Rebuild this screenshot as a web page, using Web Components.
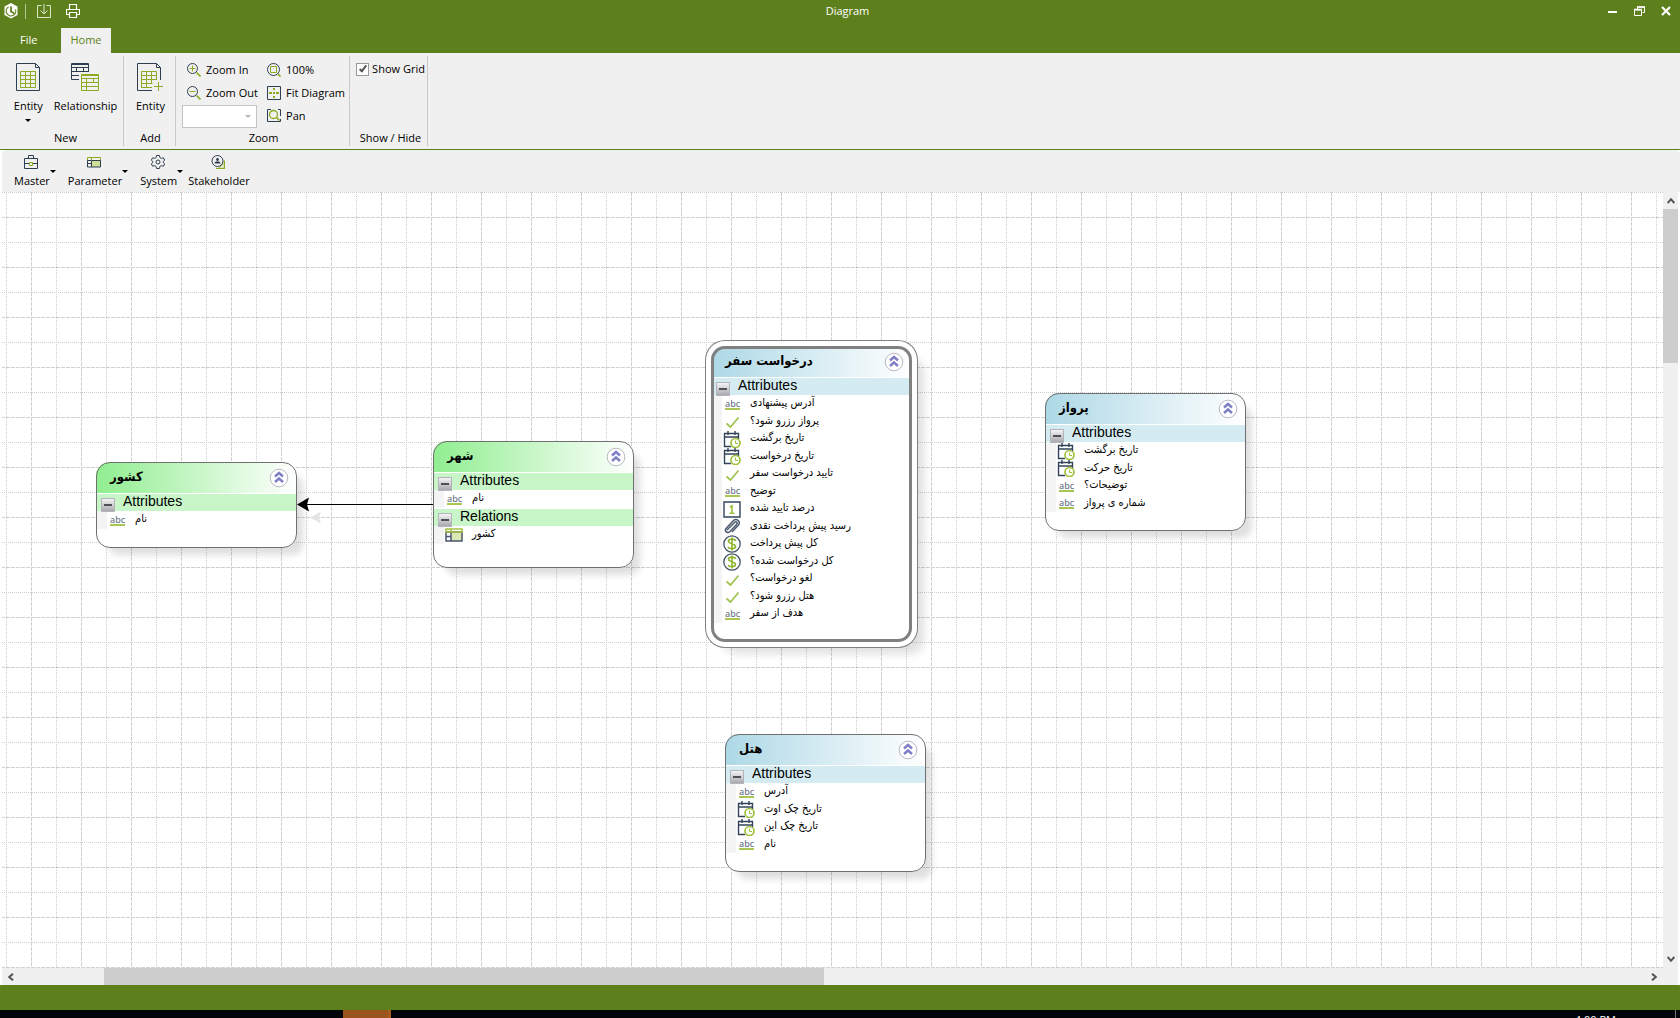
<!DOCTYPE html>
<html lang="en">
<head>
<meta charset="utf-8">
<title>Diagram</title>
<style>
html, body { height: 100%; }
body { margin: 0; overflow: hidden; font: 11px/16px "Open Sans", "Noto Sans", sans-serif; color: #000; }
</style>
</head>
<body>
<diagram-app></diagram-app>
<script>
const G = '#8aab22', N = '#2f3f52';
const ICONS = {
  logo: [14, 16, `<path d="M7 0l6.500 3.500v8.500L7 15.500.5 12V3.500z" fill="#fff"/><path d="M7 3.500v5l3.500 2" fill="none" stroke="#5e801c" stroke-width="1.800"/><path d="M4.500 4A4.800 4.800 0 1 0 11.500 6.500" fill="none" stroke="#5e801c" stroke-width="1.200"/>`],
  save: [14, 14, `<path d="M4.500 1.500h-4v12h13v-12h-4M7 0v9M3.500 6.500L7 10l3.500-3.500" fill="none" stroke="#dfe8cf"/>`],
  print: [14, 14, `<path d="M3.500 5V.500h7V5M3.500 10.500h-3v-5h13v5h-3M3.500 8.500h7v5h-7z" fill="none" stroke="#fff" stroke-width="1.200"/>`],
  min: [11, 11, `<path d="M1 6h9" stroke="#fff" stroke-width="2"/>`],
  restore: [11, 10, `<path d="M.5 4h7v5.500h-7zM3.500 3V1h7v5.500h-2" fill="none" stroke="#fff"/><path d="M0 3.500h8M3 1h8" stroke="#fff" stroke-width="1.500"/>`],
  close: [10, 10, `<path d="M1 1l8 8M9 1L1 9" stroke="#fff" stroke-width="2.200"/>`],
  entity: [24, 28, `<path d="M.5.500h19l4 4v23H.500zM19.500.500v4h4" fill="none" stroke="${N}"/><path d="M4.500 8.500h15v16h-15zM4.500 12.500h15M4.500 16.500h15M4.500 20.500h15M9.500 8.500v16M14.500 8.500v16" fill="none" stroke="${G}"/>`],
  relation: [28, 28, `<path d="M8 16.500H.500V.500h17V8M.500 4.500h17M.500 8.500H18M.500 12.500H8M5.500 4v5M.500 1.500h17M12.500 4v5" fill="none" stroke="${N}"/><path d="M10.500 11.500h17v16h-17zM10.500 12.500h17M10.500 15.500h17M10.500 19.500h17M10.500 23.500h17M15.500 15v12M22.500 15v5" fill="none" stroke="${G}"/>`],
  addEntity: [28, 28, `<path d="M15 27.500H.500V.500h19l4 4V17M19.500.500v4h4" fill="none" stroke="${N}"/><path d="M15 24.500H4.500v-16h15V17M4.500 12.500h15M4.500 16.500h15M4.500 20.500h11M9.500 8.500v16M14.500 8.500v12M21.500 19v9M17 23.500h9" fill="none" stroke="${G}"/>`],
  zoomIn: [14, 14, `<circle cx="5.500" cy="5.500" r="5" fill="none" stroke="${N}"/><path d="M2.500 5.500h6M5.500 2.500v6" stroke="${G}"/><path d="M9.500 9.500L13.500 13.500" stroke="${G}" stroke-width="1.600"/>`],
  zoomOut: [14, 14, `<circle cx="5.500" cy="5.500" r="5" fill="none" stroke="${N}"/><path d="M2.500 5.500h6" stroke="${G}"/><path d="M9.500 9.500L13.500 13.500" stroke="${G}" stroke-width="1.600"/>`],
  hundred: [14, 14, `<circle cx="6.500" cy="6.500" r="6" fill="none" stroke="${N}"/><path d="M3.500 3.500h6v6h-6z" fill="none" stroke="${G}"/><path d="M11 11l2.500 2.500" stroke="${G}" stroke-width="1.600"/>`],
  fit: [14, 14, `<path d="M.5.500h13v13H.500z" fill="none" stroke="${N}"/><path d="M6 2h2v2H6zM6 6h2v2H6zM6 10h2v2H6zM2 6h3v2H2zM9 6h3v2H9z" fill="${G}"/>`],
  pan: [14, 13, `<path d="M4 .500H.500v12h13V10M11 .500h2.500V7" fill="none" stroke="${N}"/><circle cx="6.500" cy="5.500" r="4" fill="none" stroke="${G}" stroke-width="1.300"/><path d="M9.500 8.500l3 3" stroke="${G}" stroke-width="1.600"/>`],
  master: [14, 14, `<path d="M.5 3.500h13v10H.500zM4.500 3V.500h5V3M0 8.500h5M9 8.500h5" fill="none" stroke="${N}"/><path d="M5.500 7.500h3v3h-3z" fill="none" stroke="${G}"/>`],
  param: [14, 12, `<path d="M5 4h8v7H5z" fill="#cfdf98"/><path d="M.5 1.500h13v3H.500z" fill="none" stroke="${G}"/><path d="M.5 4.500h13v6.500H.500zM4.500 4v7M.500 7.500h4" fill="none" stroke="${N}"/><path d="M4.500 1v3.500" fill="none" stroke="${G}"/>`],
  gear: [14, 14, `<path d="M5.600.500h2.800l.5 2 1.500.9 2-.6 1.300 2.400-1.500 1.300v1l1.500 1.300-1.300 2.400-2-.6-1.500.9-.5 2H5.600l-.5-2-1.500-.9-2 .6L.300 8.800l1.500-1.300v-1L.300 5.200l1.300-2.400 2 .6 1.500-.9z" fill="none" stroke="${N}"/><circle cx="7" cy="7" r="2" fill="none" stroke="${N}"/>`],
  stake: [14, 14, `<path d="M5 13.500h8.500v-8" fill="none" stroke="${G}" stroke-width="1.500"/><path d="M8.500 12.200L12.200 9" stroke="${G}"/><circle cx="6.500" cy="6" r="5.500" fill="#f0f0f0" stroke="${N}"/><circle cx="6.500" cy="4.500" r="1.400" fill="${N}"/><path d="M3.500 8.500c0-3 6-3 6 0z" fill="${N}"/>`],
  chevrons: [20, 20, `<circle cx="10" cy="10" r="8.800" fill="#fff" stroke="#b9b9c4"/><path d="M6 8.500L10 5l4 3.500M6 14l4-3.500L14 14" fill="none" stroke="#7f7fc6" stroke-width="2.500"/>`],
  abc: [17, 17, `<text x="1" y="11" font-family="Noto Sans, sans-serif" font-size="9" font-weight="500" fill="#6d7887">abc</text><path d="M1 13h15" stroke="#a9c653" stroke-width="2"/>`],
  check: [17, 17, `<path d="M2.500 10.500L6.500 14 14.500 4.500" fill="none" stroke="#9fc24c" stroke-width="1.700"/>`],
  date: [18, 17, `<path d="M8 15.500H1.500V2.500h14V8M1.500 6h14" fill="none" stroke="#33445a" stroke-width="1.400"/><path d="M5 0v4M12 0v4" stroke="#33445a" stroke-width="1.400"/><circle cx="12.500" cy="12" r="4.500" fill="#fff" stroke="#9fc13c" stroke-width="1.700"/><path d="M12.500 9.500v3h2.500" fill="none" stroke="#9fc13c"/>`],
  number: [18, 17, `<path d="M1 1h16v15H1z" fill="#fff" stroke="#33445a" stroke-width="1.400"/><path d="M7 6l2-1.200V12M6.500 12.300h5" fill="none" stroke="#9fc13c" stroke-width="1.600"/>`],
  clip: [18, 17, `<path d="M4 12l7.500-7.500c1.500-1.500 3.500 0 2 2L7 13.500c-2.500 2.500-6-.500-4-3L10.500 2.500c3-2.800 7.500 1 5 4.500L9 14" fill="none" stroke="#4c5b6e" stroke-width="1.500"/>`],
  money: [18, 18, `<circle cx="9" cy="9" r="8.200" fill="#fff" stroke="#445467" stroke-width="1.300"/><path d="M12.500 6c-.5-2.500-7-2.500-7 .300 0 3 7 2 7 5.200 0 3-7 2.800-7.200.2M9 2.500v13" fill="none" stroke="#8fb52c" stroke-width="1.600"/>`],
  relTable: [18, 14, `<path d="M7 5h10v8H7z" fill="#dce8b4"/><path d="M1 4h16v9H1zM6 4v9M1 8.500h5" fill="none" stroke="#45566a" stroke-width="1.500"/><path d="M1 1h16v3H1zM6 1v3" fill="none" stroke="#a4c245" stroke-width="1.600"/>`],
  up: [8, 7, `<path d="M.7 6L4 2.200 7.300 6" fill="none" stroke="#555" stroke-width="2"/>`],
  down: [8, 7, `<path d="M.7 1L4 4.800 7.300 1" fill="none" stroke="#555" stroke-width="2"/>`],
  left: [7, 8, `<path d="M6 .7L2.200 4 6 7.300" fill="none" stroke="#555" stroke-width="2"/>`],
  right: [7, 8, `<path d="M1 .7L4.800 4 1 7.300" fill="none" stroke="#555" stroke-width="2"/>`]
};
const RESET = `<style>
*, *::before, *::after { box-sizing: border-box; }
button, select, input { font: inherit; color: inherit; margin: 0; }
button { border: 0; padding: 0; background: none; }
</style>`;
class Base extends HTMLElement {
  connectedCallback() {
    if (this.shadowRoot) return;
    this.attachShadow({ mode: 'open' }).innerHTML = RESET + this.view();
  }
  at(name) { return this.getAttribute(name) || ''; }
}
class UiIcon extends Base {
  view() {
    const [w, h, body] = ICONS[this.at('name')];
    return `<style>:host{display:block;flex:none;width:${w}px;height:${h}px}svg{display:block}</style>
      <svg width="${w}" height="${h}" viewBox="0 0 ${w} ${h}" aria-hidden="true">${body}</svg>`;
  }
}
class TitleBar extends Base {
  view() {
    return `<style>
      :host{display:grid;grid-template-columns:1fr auto 1fr;align-items:center;height:28px;padding:0 9px 6px 4px;background:#5e801c;color:#fff}
      .left,.right{display:flex;align-items:center}
      .right{justify-content:flex-end;gap:16px}
      .sep{width:1px;height:15px;background:#b5c698;margin:0 11px 0 7px}
      .left button+button{margin-left:15px}
      h1{font:inherit;margin:0;padding-left:20px}
    </style>
    <div class="left"><ui-icon name="logo"></ui-icon><span class="sep"></span>
      <button aria-label="Save"><ui-icon name="save"></ui-icon></button><button aria-label="Print"><ui-icon name="print"></ui-icon></button></div>
    <h1>Diagram</h1>
    <div class="right"><button aria-label="Minimize"><ui-icon name="min"></ui-icon></button><button aria-label="Restore"><ui-icon name="restore"></ui-icon></button><button aria-label="Close"><ui-icon name="close"></ui-icon></button></div>`;
  }
}
class RibbonTabs extends Base {
  view() {
    return `<style>
      :host{display:flex;height:25px;padding-left:11px;gap:15px;background:#5e801c;color:#fff}
      button{padding:0 9px 2px}
      .on{background:#f0f0f0;color:#5e801c}
    </style><button>File</button><button class="on">Home</button>`;
  }
}
class RibbonGroup extends Base {
  view() {
    return `<style>
      :host{display:flex;flex-direction:column;box-sizing:border-box;border-right:1px solid #c8c8c8}
      .body{flex:1;display:flex;justify-content:center}
      .label{text-align:center;line-height:16px}
    </style><div class="body"><slot></slot></div><div class="label">${this.at('label')}</div>`;
  }
}
class BigButton extends Base {
  view() {
    return `<style>
      :host{display:block}
      button{display:flex;flex-direction:column;align-items:center;gap:7px;padding-top:7px;line-height:16px}
      .caret{border:3px solid transparent;border-top-color:#000;border-bottom:0;margin-top:-2px}
    </style><button><ui-icon name="${this.at('icon')}"></ui-icon><span>${this.at('label')}</span>${this.hasAttribute('menu') ? '<span class="caret"></span>' : ''}</button>`;
  }
}
class SmallButton extends Base {
  view() {
    return `<style>
      :host{display:block}
      button{display:flex;align-items:center;gap:5px;height:23px;white-space:nowrap}
    </style><button><ui-icon name="${this.at('icon')}"></ui-icon><span>${this.at('label')}</span></button>`;
  }
}
class ZoomSelect extends Base {
  view() {
    return `<style>
      :host{display:grid;align-items:center;width:75px;height:23px}
      select,.caret{grid-area:1/1}
      select{appearance:none;width:100%;height:100%;border:1px solid #c4c4c4;border-radius:0;background:#fff;opacity:1}
      .caret{justify-self:end;margin-right:6px;border:3px solid transparent;border-top-color:#b8b8b8;border-bottom:0;z-index:1}
    </style><select aria-label="Zoom level" disabled></select><span class="caret"></span>`;
  }
}
class GridToggle extends Base {
  view() {
    return `<style>
      :host{display:block}
      label{display:flex;align-items:center;gap:3px;height:16px;margin-top:5px;white-space:nowrap}
      input{appearance:none;width:13px;height:13px;border:1px solid #9a9a9a;background:#fff;display:grid;place-items:center}
      input:checked::after{content:"";width:4px;height:8px;border:solid #555;border-width:0 2px 2px 0;transform:rotate(38deg);margin-top:-2px}
    </style><label for="g"><input id="g" type="checkbox" checked>Show Grid</label>`;
  }
}
class RibbonBar extends Base {
  view() {
    return `<style>
      :host{display:flex;box-sizing:border-box;height:97px;padding:3px 0;background:#f0f0f0;border-bottom:1px solid #5e801c}
      .new{width:124px;padding-left:8px}.add{width:52px;padding-left:2px}.zoom{width:174px;padding-left:2px}.show{width:78px;padding-left:4px}
      .new big-button+big-button{margin-left:11px}
      .cols{display:flex;gap:9px}
      .col{display:flex;flex-direction:column;padding-top:2px}
      .col:first-child small-button{padding-left:5px}
      .col:first-child{width:76px}
      .col zoom-select{margin-top:1px}
    </style>
    <ribbon-group class="new" label="New"><big-button icon="entity" label="Entity" menu></big-button><big-button icon="relation" label="Relationship"></big-button></ribbon-group>
    <ribbon-group class="add" label="Add"><big-button icon="addEntity" label="Entity"></big-button></ribbon-group>
    <ribbon-group class="zoom" label="Zoom"><div class="cols"><div class="col"><small-button icon="zoomIn" label="Zoom In"></small-button><small-button icon="zoomOut" label="Zoom Out"></small-button><zoom-select></zoom-select></div>
      <div class="col"><small-button icon="hundred" label="100%"></small-button><small-button icon="fit" label="Fit Diagram"></small-button><small-button icon="pan" label="Pan"></small-button></div></div></ribbon-group>
    <ribbon-group class="show" label="Show / Hide"><grid-toggle></grid-toggle></ribbon-group>`;
  }
}
class ToolButton extends Base {
  view() {
    const m = this.hasAttribute('menu');
    return `<style>
      :host{display:block}
      button{display:flex;align-items:center;line-height:16px;padding-left:${m ? 7 : 0}px}
      .c{display:flex;flex-direction:column;align-items:center}
      .i{height:18px;display:flex;align-items:center;margin-bottom:2px;padding-right:2px}
      .caret{border:3px solid transparent;border-top-color:#000;border-bottom:0}
    </style><button><span class="c"><span class="i"><ui-icon name="${this.at('icon')}"></ui-icon></span><span>${this.at('label')}</span></span>${m ? '<span class="caret"></span>' : ''}</button>`;
  }
}
class ToolStrip extends Base {
  view() {
    return `<style>
      :host{display:flex;box-sizing:border-box;gap:5px;height:42px;margin-left:2px;padding:3px 5px;background:#f0f0f0;border-radius:4px 4px 0 0}
    </style><tool-button icon="master" label="Master" menu></tool-button><tool-button icon="param" label="Parameter" menu></tool-button><tool-button icon="gear" label="System" menu></tool-button><tool-button icon="stake" label="Stakeholder"></tool-button>`;
  }
}
class AttrRow extends Base {
  view() {
    return `<style>
      :host{display:flex;height:18px;align-items:center}
      :host(:nth-child(even)){height:17px}
      .strip{width:11px;height:100%;background:#f4f4f4;flex:none}
      .i{width:20px;margin-right:8px;display:flex;justify-content:center;flex:none}
      .t{font:var(--row-font);line-height:16px;margin-top:-2px;white-space:nowrap}
    </style><span class="strip"></span><span class="i"><ui-icon name="${this.at('icon')}"></ui-icon></span><span class="t" dir="rtl" lang="fa">${this.at('label')}</span>`;
  }
}
class NodeSection extends Base {
  view() {
    return `<style>
      :host{display:block;margin-top:1px}
      .bar{display:flex;height:17px;background:var(--bar);font:14px/14px "Liberation Sans",Arial,sans-serif}
      button{width:14px;height:14px;margin:4px 8px 0 5px;border:1px solid #b4b4bc;background:linear-gradient(#f4f4f6,#a9a9ae);display:grid;place-items:center;position:relative}
      button::after{content:"";width:8px;height:2px;background:#505058}
    </style><div class="bar"><button aria-label="Collapse ${this.at('label')}"></button><span>${this.at('label')}</span></div><div><slot></slot></div>`;
  }
}
class EntityNode extends Base {
  view() {
    return `<style>
      :host{--bar:#d5ebf2;--tint:#add8e6;--row-font:11px "DejaVu Sans Condensed","DejaVu Sans",sans-serif;
        display:block;position:absolute;width:201px;padding-bottom:19px;background:#fff;border-radius:14px;box-shadow:9px 10px 7px -3px rgba(0,0,0,.13)}
      :host([kind=green]){--bar:#c8f6c8;--tint:#90ee90}
      :host::after{content:"";position:absolute;inset:0;border:1px solid #707070;border-radius:14px;pointer-events:none}
      :host([selected])::after{border:3px solid #808080}
      :host([selected]){box-shadow:0 0 0 5px #fff,0 0 0 6px #808080,12px 12px 8px 0 rgba(0,0,0,.12)}
      header{display:flex;justify-content:space-between;align-items:center;height:31px;padding:0 8px 0 14px;border-radius:14px 14px 0 0;background:linear-gradient(90deg,var(--tint),#fff)}
      h2{margin:0;padding-bottom:2px;font:bold 13px/18px "DejaVu Sans Condensed","DejaVu Sans",sans-serif}
    </style><header><h2 dir="rtl" lang="fa">${this.at('label')}</h2><button aria-label="Collapse entity"><ui-icon name="chevrons"></ui-icon></button></header><slot></slot>`;
  }
}
class DiagramCanvas extends Base {
  view() {
    const rows = list => list.map(([i, t]) => `<attr-row icon="${i}" label="${t}"></attr-row>`).join('');
    const sec = (l, list) => `<node-section label="${l}">${rows(list)}</node-section>`;
    return `<style>
      :host{display:block;position:relative;overflow:hidden;background:#fff}
      svg{position:absolute;inset:0}
      .country{left:94px;top:270px}.city{left:431px;top:249px;padding-bottom:24px}
      .request{left:709px;top:154px}.flight{left:1043px;top:201px}.hotel{left:723px;top:542px}
    </style>
    <svg width="100%" height="100%" aria-hidden="true">
      <defs><pattern id="p" width="50" height="50" x="4" patternUnits="userSpaceOnUse">
        <path d="M.5 0v50M0 .5h50" stroke="#cfcfcf" stroke-dasharray="1 1"/>
        <path d="M25.500 0v50M0 25.500h50" stroke="#d0d0d0" stroke-dasharray="4 1"/>
      </pattern></defs>
      <rect width="100%" height="100%" fill="url(#p)"/>
      <path d="M304 312.500h128" stroke="#000"/><path d="M295 312.500l12-7-2 7 2 7z" fill="#000"/>
      <path d="M308 325.500l11-6-2 6 2 6z" fill="#e4e4e4"/>
    </svg>
    <entity-node class="country" kind="green" label="کشور">${sec('Attributes', [['abc', 'نام']])}</entity-node>
    <entity-node class="city" kind="green" label="شهر">${sec('Attributes', [['abc', 'نام']])}${sec('Relations', [['relTable', 'کشور']])}</entity-node>
    <entity-node class="request" selected label="درخواست سفر">${sec('Attributes', [['abc', 'آدرس پیشنهادی'], ['check', 'پرواز رزرو شود؟'], ['date', 'تاریخ برگشت'], ['date', 'تاریخ درخواست'], ['check', 'تایید درخواست سفر'], ['abc', 'توضیح'], ['number', 'درصد تایید شده'], ['clip', 'رسید پیش پرداخت نقدی'], ['money', 'کل پیش پرداخت'], ['money', 'کل درخواست شده؟'], ['check', 'لغو درخواست؟'], ['check', 'هتل رزرو شود؟'], ['abc', 'هدف از سفر']])}</entity-node>
    <entity-node class="flight" label="پرواز">${sec('Attributes', [['date', 'تاریخ برگشت'], ['date', 'تاریخ حرکت'], ['abc', 'توضیحات؟'], ['abc', 'شماره ی پرواز']])}</entity-node>
    <entity-node class="hotel" label="هتل">${sec('Attributes', [['abc', 'آدرس'], ['date', 'تاریخ چک اوت'], ['date', 'تاریخ چک این'], ['abc', 'نام']])}</entity-node>`;
  }
}
class ScrollTrack extends Base {
  view() {
    const v = this.hasAttribute('vertical');
    return `<style>
      :host{display:flex;flex-direction:${v ? 'column' : 'row'};background:#f0f0f0}
      button{flex:none;display:grid;place-items:center;${v ? 'height:17px' : 'width:17px'}}
      .track{flex:1;display:flex;flex-direction:inherit}
      .before{flex:${v ? 0 : 85}}.thumb{flex:${v ? 154 : 720};background:#cdcdcd}.after{flex:${v ? 587 : 822}}
    </style><button aria-label="Scroll back"><ui-icon name="${v ? 'up' : 'left'}"></ui-icon></button>
    <div class="track"><span class="before"></span><span class="thumb"></span><span class="after"></span></div>
    <button aria-label="Scroll forward"><ui-icon name="${v ? 'down' : 'right'}"></ui-icon></button>`;
  }
}
class StatusArea extends Base {
  view() {
    return `<style>
      :host{display:block}
      .status{height:25px;background:#5e801c}
      .task{height:8px;background:#000308;overflow:hidden;display:flex;justify-content:space-between;padding:0 4px 0 343px;color:#fff}
      .app{width:48px;background:#9b541c;border-right:3px solid #a85c22}
      .clock{display:flex}
      time{padding-top:2px;margin-right:59px}
      .edge{width:1px;background:#777}
    </style><div class="status"></div><div class="task"><span class="app"></span><span class="clock"><time>4:00 PM</time><span class="edge"></span></span></div>`;
  }
}
class DiagramApp extends Base {
  view() {
    return `<style>
      :host{display:flex;flex-direction:column;height:100vh;background:#fff}
      main{flex:1;min-height:0;display:grid;grid-template-columns:1fr 15px;grid-template-rows:1fr 17px;padding:0 2px}
      .corner{background:#f0f0f0}
    </style><title-bar></title-bar><ribbon-tabs></ribbon-tabs><ribbon-bar></ribbon-bar><tool-strip></tool-strip>
    <main><diagram-canvas></diagram-canvas><scroll-track vertical></scroll-track><scroll-track></scroll-track><div class="corner"></div></main>
    <status-area></status-area>`;
  }
}
Object.entries({
  'ui-icon': UiIcon, 'title-bar': TitleBar, 'ribbon-tabs': RibbonTabs, 'ribbon-group': RibbonGroup,
  'big-button': BigButton, 'small-button': SmallButton, 'zoom-select': ZoomSelect, 'grid-toggle': GridToggle,
  'ribbon-bar': RibbonBar, 'tool-button': ToolButton, 'tool-strip': ToolStrip, 'attr-row': AttrRow,
  'node-section': NodeSection, 'entity-node': EntityNode, 'diagram-canvas': DiagramCanvas,
  'scroll-track': ScrollTrack, 'status-area': StatusArea, 'diagram-app': DiagramApp
}).forEach(([n, c]) => customElements.define(n, c));
</script>
</body>
</html>
